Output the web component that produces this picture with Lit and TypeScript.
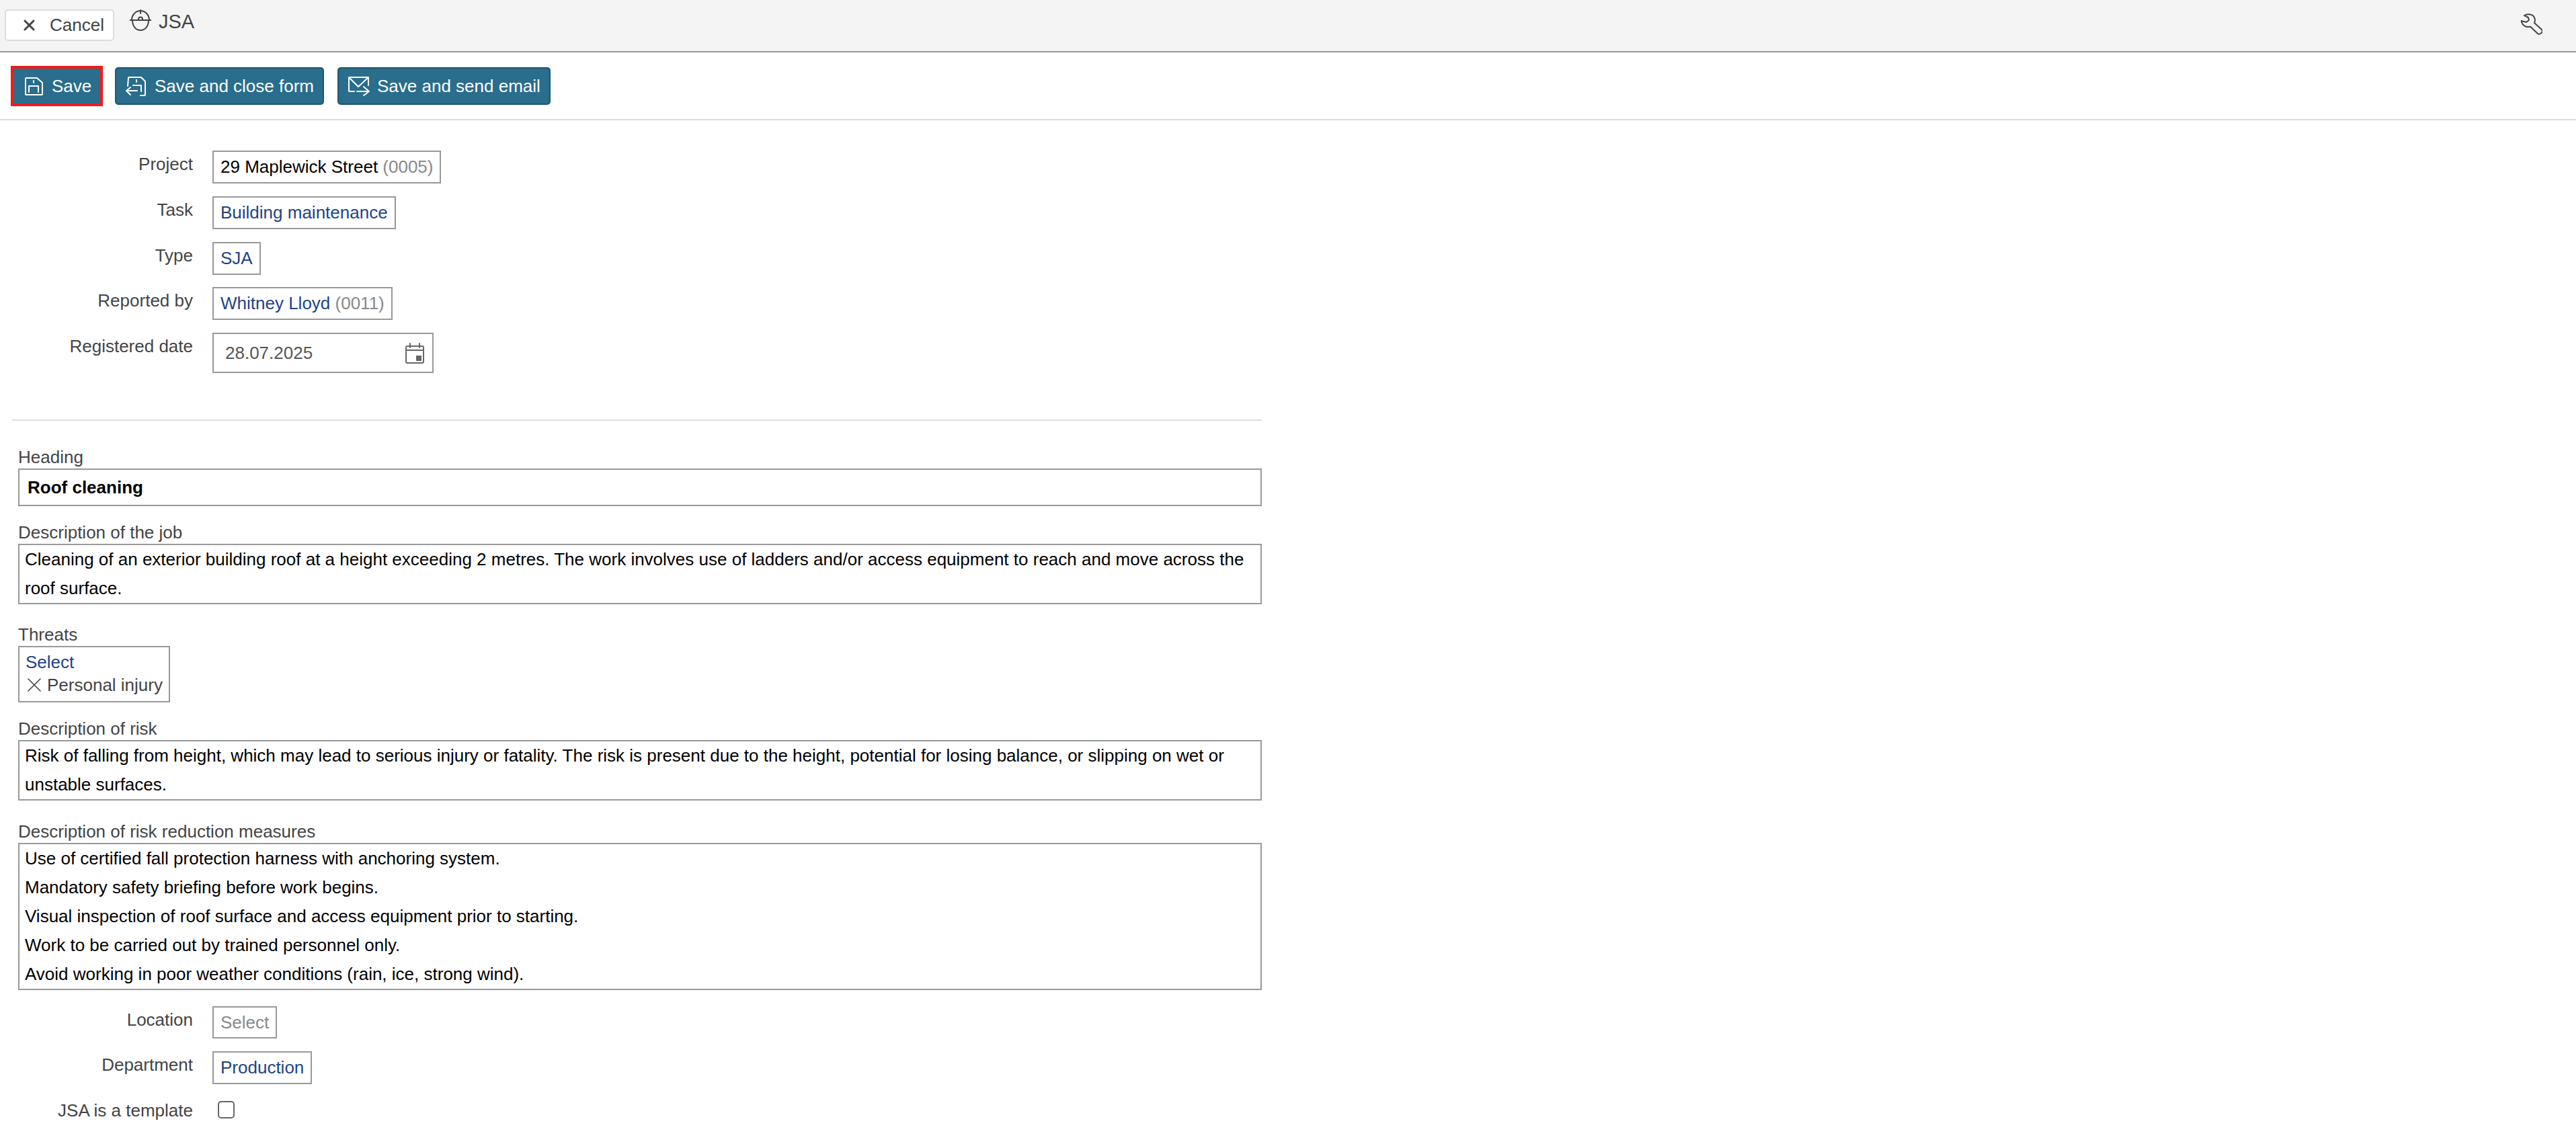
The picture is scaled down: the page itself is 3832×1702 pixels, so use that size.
import { LitElement, html, css, svg } from "lit";
import { customElement } from "lit/decorators.js";

const helmet = svg`<path d="M3 16C3 8 9 2 16 2S29 8 29 16M4 16C4 25 9 31 16 31S28 25 28 16M0 16H32M16 1V6M13 16V14.5A3 3 0 0 1 19 14.5V16"/>`;
const cross = svg`<path d="M2 2L15 15M15 2L2 15"/>`;
const wrench = svg`<path d="M5 3C10 0 18 1 20 6C22 10 21 12 20 14L31 24C32.5 26 32 28 30 29.5C28 31 26 31 24.5 29.5L14 19.5C8 21.5 2 18 .5 11L8 13L12 10L11 6Z"/>`;
const saveIcon = svg`<path d="M3 1H19L27 8V25A1 1 0 0 1 26 26H3A1 1 0 0 1 2 25V2A1 1 0 0 1 3 1ZM7 22V13H21V22M14 5V8"/>`;
const saveCloseIcon = svg`<path d="M3 14L4 2A1 1 0 0 1 5 1H23L29 7V27A1 1 0 0 1 28 28H22M11 13H23V22M1 21H17M7 16L1 21L7 27M16 5V8"/>`;
const saveMailIcon = svg`<path d="M2 1H30V13M1 1V21A1 1 0 0 0 2 22H9M1 1L15 15L30 1M13 22H31M23 15L31 22L23 28"/>`;
const calendar = svg`<path d="M3 5H25A2 2 0 0 1 27 7V28A2 2 0 0 1 25 30H3A2 2 0 0 1 1 28V7A2 2 0 0 1 3 5ZM1 11H27M7 1V7M21 1V7"/><rect class="fill" x="16" y="19" width="8" height="8"/>`;

@customElement("app-root")
export class AppRoot extends LitElement {
  static styles = css`
    :host { display: block; font-family: "Liberation Sans", Arial, sans-serif; font-size: 26px; color: #000; background: #fff; }
    svg { display: block; fill: none; stroke-linecap: round; stroke-linejoin: round; flex: none; }
    .fill { fill: #666; stroke: none; }
    .header { height: 76px; background: #f4f4f4; border-bottom: 2px solid #999; display: flex; align-items: flex-start; padding-left: 7px; color: #444; }
    .cancel { margin-top: 14px; width: 163px; height: 47px; box-sizing: border-box; background: #fff; border: 2px solid #ddd; border-radius: 5px; display: flex; align-items: center; padding-left: 26px; }
    .cancel span { margin-left: 22px; }
    .cancel svg { stroke: #444; stroke-width: 3; }
    .helmet { margin: 14px 0 0 23px; stroke: #444; stroke-width: 2; }
    .title { font-size: 29px; margin: 17px 0 0 11px; line-height: 30px; }
    .wrench { margin: 20px 50px 0 auto; stroke: #444; stroke-width: 2; }
    .toolbar { display: flex; gap: 20px; padding: 22px 0 21px 18px; border-bottom: 2px solid #ddd; }
    .btn { height: 56px; box-sizing: border-box; background: #2a6d8c; border: 2px solid #20566f; border-radius: 5px; color: #fff; display: flex; align-items: center; white-space: nowrap; }
    .btn svg { stroke: #fff; stroke-width: 2; }
    .save { width: 133px; border-color: #f21a1a; border-radius: 0; outline: 2px solid #f21a1a; padding-left: 16px; gap: 13px; }
    .close { width: 311px; padding-left: 14px; gap: 13px; }
    .mail { width: 317px; padding-left: 14px; gap: 11px; }
    .rows { padding-top: 45px; }
    .row { display: flex; margin-bottom: 19px; }
    .rows .row:nth-child(3) { margin-bottom: 18px; }
    .rows .row:last-child { margin-bottom: 0; }
    .label { width: 287px; margin-right: 29px; text-align: right; line-height: 40px; color: #444; flex: none; }
    .field { display: flex; align-items: center; height: 49px; box-sizing: border-box; border: 2px solid #999; padding: 0 10px; white-space: nowrap; }
    .link { color: #1d4488; }
    .muted { color: #888; }
    .date { width: 329px; height: 60px; padding: 0 12px 0 17px; justify-content: space-between; color: #555; }
    .date svg { stroke: #666; stroke-width: 2; }
    hr { margin: 69px 0 0 18px; width: 1859px; border: 0; height: 2px; background: #ddd; }
    .stack { padding-left: 27px; width: 1850px; }
    .block { margin-top: 23px; }
    .first { margin-top: 38px; }
    .wide { margin-top: 29px; }
    .wider { margin-top: 30px; }
    .cap { line-height: 33px; height: 33px; color: #444; }
    .box { border: 2px solid #999; line-height: 43px; padding: 0 8px; }
    .heading { font-weight: bold; height: 56px; box-sizing: border-box; line-height: 52px; padding-left: 12px; }
    .threats { width: 226px; box-sizing: border-box; height: 84px; border: 2px solid #999; padding: 5px 0 0 9px; line-height: 34px; white-space: nowrap; }
    .chip { display: flex; align-items: center; color: #444; }
    .chip svg { stroke: #444; stroke-width: 1.5; margin: 0 9px 0 3px; }
    .low { padding-top: 24px; }
    .placeholder { color: #888; }
    .check { width: 25px; height: 26px; box-sizing: border-box; border: 2px solid #666; border-radius: 5px; margin: 6px 0 0 8px; }
    .short { height: 48px; }
  `;

  render() {
    return html`
      <div class="header">
        <div class="cancel"><svg width="17" height="17" viewBox="0 0 17 17">${cross}</svg><span>Cancel</span></div>
        <svg class="helmet" width="32" height="32" viewBox="0 0 32 32">${helmet}</svg>
        <div class="title">JSA</div>
        <svg class="wrench" width="32" height="32" viewBox="0 0 32 32">${wrench}</svg>
      </div>
      <div class="toolbar">
        <div class="btn save"><svg width="28" height="27" viewBox="0 0 28 27">${saveIcon}</svg>Save</div>
        <div class="btn close"><svg width="30" height="29" viewBox="0 0 30 29">${saveCloseIcon}</svg>Save and close form</div>
        <div class="btn mail"><svg width="32" height="29" viewBox="0 0 32 29">${saveMailIcon}</svg>Save and send email</div>
      </div>
      <div class="rows">
        <div class="row"><div class="label">Project</div><div class="field">29 Maplewick Street&nbsp;<span class="muted">(0005)</span></div></div>
        <div class="row"><div class="label">Task</div><div class="field link">Building maintenance</div></div>
        <div class="row"><div class="label">Type</div><div class="field link">SJA</div></div>
        <div class="row"><div class="label">Reported by</div><div class="field link">Whitney Lloyd&nbsp;<span class="muted">(0011)</span></div></div>
        <div class="row"><div class="label">Registered date</div><div class="field date">28.07.2025<svg width="28" height="31" viewBox="0 0 28 31">${calendar}</svg></div></div>
      </div>
      <hr />
      <div class="stack">
        <div class="first">
          <div class="cap">Heading</div>
          <div class="box heading">Roof cleaning</div>
        </div>
        <div class="block">
          <div class="cap">Description of the job</div>
          <div class="box">Cleaning of an exterior building roof at a height exceeding 2 metres. The work involves use of ladders and/or access equipment to reach and move across the roof surface.</div>
        </div>
        <div class="wide">
          <div class="cap">Threats</div>
          <div class="threats">
            <div class="link">Select</div>
            <div class="chip"><svg width="20" height="20" viewBox="0 0 20 20"><path d="M1 1L19 19M19 1L1 19"/></svg>Personal injury</div>
          </div>
        </div>
        <div class="block">
          <div class="cap">Description of risk</div>
          <div class="box">Risk of falling from height, which may lead to serious injury or fatality. The risk is present due to the height, potential for losing balance, or slipping on wet or unstable surfaces.</div>
        </div>
        <div class="wider">
          <div class="cap">Description of risk reduction measures</div>
          <div class="box">
            <div>Use of certified fall protection harness with anchoring system.</div>
            <div>Mandatory safety briefing before work begins.</div>
            <div>Visual inspection of roof surface and access equipment prior to starting.</div>
            <div>Work to be carried out by trained personnel only.</div>
            <div>Avoid working in poor weather conditions (rain, ice, strong wind).</div>
          </div>
        </div>
      </div>
      <div class="low">
        <div class="row"><div class="label">Location</div><div class="field placeholder short">Select</div></div>
        <div class="row"><div class="label">Department</div><div class="field link">Production</div></div>
        <div class="row"><div class="label">JSA is a template</div><div class="check"></div></div>
      </div>
    `;
  }
}
